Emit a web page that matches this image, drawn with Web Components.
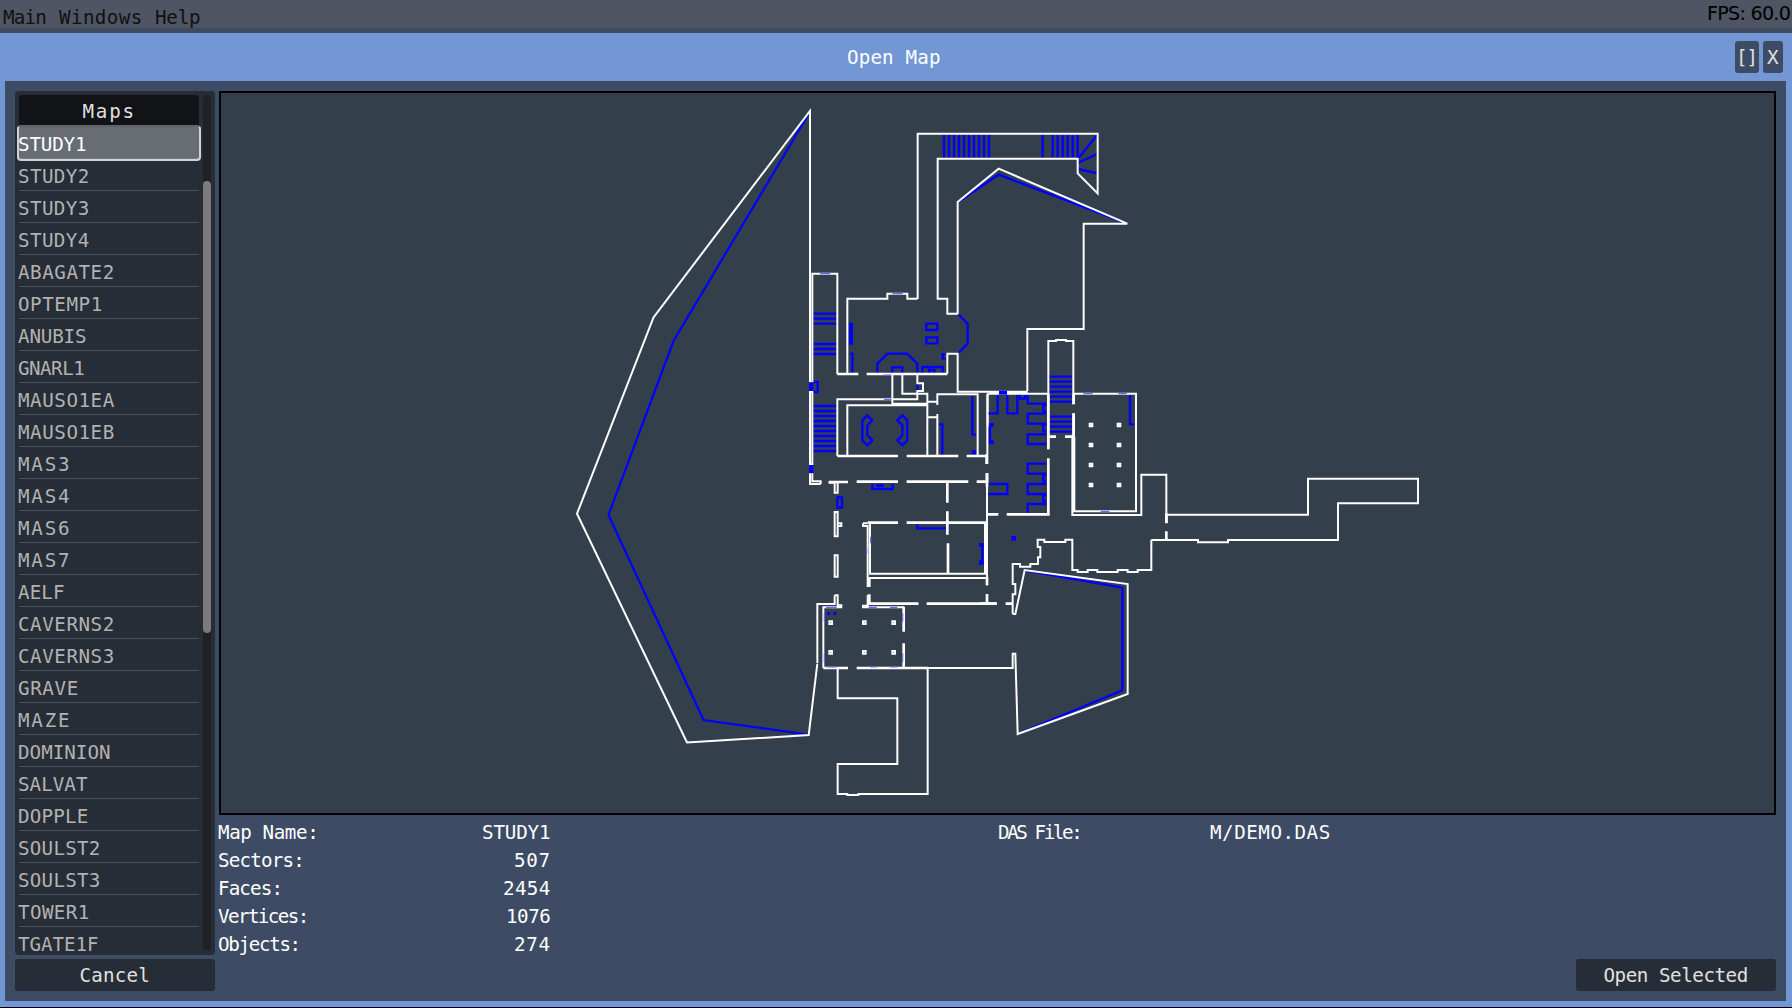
<!DOCTYPE html>
<html lang="en">
<head>
<meta charset="utf-8">
<title>Open Map</title>
<style>
html,body{margin:0;height:100%;background:#000;overflow:hidden}
body{font:19.2px/28px "DejaVu Sans Mono","Liberation Mono",monospace;color:#fff}
</style>
</head>
<body>
<map-app></map-app>
<script>
const define = (name, html, setup) => customElements.define(name, class extends HTMLElement {
  constructor() {
    super();
    const t = document.createElement('template');
    t.innerHTML = html;
    this.attachShadow({mode: 'open'}).append(t.content.cloneNode(true));
  }
  connectedCallback() { if (setup && !this.ready) { this.ready = true; setup(this, this.shadowRoot); } }
});

const ruler = document.createElement('canvas').getContext('2d');

/* Text label tracked out so that its ink is exactly `w` pixels wide. */
define('px-label', `<style>
  :host{display:block;white-space:pre;flex:none;text-align:left}
  :host([sans]){font-family:"DejaVu Sans",sans-serif}
  span{display:block;margin-left:-1px}
</style><span><slot></slot></span>`, (el, root) => {
  const w = +el.getAttribute('w'), text = el.textContent;
  ruler.font = '19.2px ' + (el.hasAttribute('sans') ? '"DejaVu Sans"' : '"DejaVu Sans Mono"');
  const natural = ruler.measureText(text).width;
  el.style.width = w + 'px';
  root.querySelector('span').style.letterSpacing = ((w + 1.5 - natural) / Math.max(1, text.length - .5)).toFixed(3) + 'px';
});

define('menu-bar', `<style>
  :host{display:flex;justify-content:space-between;box-sizing:border-box;height:33px;background:#4f5562;border-bottom:5px solid #3e4a5f;color:#111;padding:0 2px 0 4px;flex:none}
  nav{display:flex;gap:14px;padding-top:4px}
  .fps{color:#000}
</style>
<nav><px-label w="42">Main</px-label><px-label w="82">Windows</px-label><px-label w="44">Help</px-label></nav>
<px-label class="fps" sans w="82">FPS: 60.0</px-label>`);

define('ui-button', `<style>
  :host{display:flex;align-items:center;justify-content:center;height:32px;padding-top:2px;border-radius:3px;background:#272d36;color:#e0e0e0;box-sizing:border-box;flex:none}
  :host([tool]){background:#3d4c64}
</style><slot></slot>`);

define('title-bar', `<style>
  :host{display:grid;grid-template-columns:1fr auto 1fr;height:48px;padding:0 9px 0 5px;align-items:center;flex:none}
  .t{grid-column:2;padding-top:2px}
  .b{display:flex;gap:4px;justify-content:flex-end}
  ui-button{width:24px}
  ui-button+ui-button{width:20px}
</style>
<px-label class="t" w="92">Open Map</px-label>
<div class="b"><ui-button tool><px-label w="20">[]</px-label></ui-button><ui-button tool><px-label w="10">X</px-label></ui-button></div>`);

define('map-row', `<style>
  :host{display:block;box-sizing:border-box;height:32px;line-height:18px;color:#b2b2b2;padding-top:9px;border-bottom:1px solid #4a4f58;flex:none;margin:0 2px}
  :host([selected]){color:#fff;background:#686c73;border:2px solid #d0d2d4;border-top-color:#606369;border-radius:4px;box-shadow:inset 0 -1px #7c7f84;height:36px;margin:0 0 -2px;padding-top:9px}
</style><slot></slot>`);

const maps = [['STUDY1',67],['STUDY2',70],['STUDY3',70],['STUDY4',70],['ABAGATE2',95],['OPTEMP1',83],['ANUBIS',67],['GNARL1',65],['MAUSO1EA',95],['MAUSO1EB',95],['MAS3',51],['MAS4',51],['MAS6',51],['MAS7',51],['AELF',45],['CAVERNS2',95],['CAVERNS3',95],['GRAVE',59],['MAZE',51],['DOMINION',91],['SALVAT',68],['DOPPLE',69],['SOULST2',81],['SOULST3',81],['TOWER1',70],['TGATE1F',79]];

define('map-list', `<style>
  :host{display:flex;height:864px;box-sizing:border-box;background:#272d36;border-radius:4px;padding:4px 4px 0 2px;gap:2px;flex:none}
  .l{width:184px;height:860px;display:flex;flex-direction:column}
  header{height:30px;flex:none;margin:0 2px;background:#111316;border-radius:3px 3px 0 0;color:#e0e0e0;display:flex;justify-content:center;padding-top:3px;box-sizing:border-box}
  map-row:last-child{height:28px;border:0}
  .track{width:8px;height:855px;border-radius:4px;background:#1f2124}
  .thumb{height:452px;margin-top:86px;border-radius:4px;background:#7b7b7c}
  .track::before{content:"";display:table}
</style>
<div class="l"><header><px-label w="51">Maps</px-label></header>
${maps.map(([n, w], i) => `<map-row${i ? '' : ' selected'}><px-label w="${w}">${n}</px-label></map-row>`).join('')}</div><div class="track"><div class="thumb"></div></div>`);

const h = (x1, x2, ys) => ys.map(y => `M${x1},${y}H${x2}`).join('');
const v = (y1, y2, xs) => xs.map(x => `M${x},${y1}V${y2}`).join('');
const sq = pts => pts.map(([x, y]) => `M${x-4},${y-4}h8v8h-8z`).join('');
const region = (x, y, body) => `<g transform="translate(${x} ${y}) scale(${1/3})">${body}</g>`;
const W = d => `<path class="w" d="${d}"/>`, T = d => `<path class="w t" d="${d}"/>`,
      B = d => `<path class="b" d="${d}"/>`, F = d => `<path class="f" d="${d}"/>`, L = d => `<path class="p" d="${d}"/>`;
const box = (x, y, w, hh) => `M${x},${y}h${w}v${hh}h${-w}z`;

const plan =
  `<g><path class="b1" d="M809.5,112.5 673.5,341 608.5,515 703.5,720 808,734.5"/>
   <path class="w1" d="M810,273V111L653.5,317.4 577,513.7 687,742.5 808.7,735 817.3,664"/></g>` +
  region(900, 110,
    B(v(74,143,[132,147,162,177,192,207,222,237,252,267,428,458,473,488,503,518,533]) +
      'M535,145L592,74M535,158L592,132M535,177L592,190M175,275L296,194 682,341') +
    W('M53,567V71H593V250L533,190V146H113V566H142V611H173V276L296,176 682,341H551V657H382V843')) +
  region(790, 260,
    B(h(70,140,[161,176,191,252,267,282,438,453,468,483,498,513,528,543,558,573]) +
      'M70,366H83V396H70M180,281H187V338M262,338V311L292,281H352L382,311V338M307,340V322H337V340' +
      box(409,191,33,19) + box(409,232,33,18) +
      'M397,338V321H458V338M417,338V330H433V338M505,163L533,191V251L505,279' +
      'M232,466L217,481V541L232,556 247,541 232,526V496L247,481Z M337,466L352,481V541L337,556 322,541 337,526V496L322,481Z' +
      'M547,408V524H558M447,493H457V583M247,672V687H308V672M458,281V296H467') +
    F(box(177,188,12,66) + box(545,571,13,12) + box(258,672,23,9) + box(379,373,7,17) + box(455,279,12,7)) +
    W('M60,30V366M67,366V41H142V343M60,396V612H67V396ZM60,640V672H92M67,640V664H92V672' +
      'M172,341V116H292V101H352V116H382M472,341V281H503V395H600' +
      'M307,343V431H412M337,343V401H412V587M382,343V370H399V393H382V418H142V588M172,585V436H412' +
      'M412,425H442V403H563V588M442,435V425M415,472H442V462M442,472V588M593,403V500') +
    T('M142,342H205M230,342H472M142,588H324M350,588H505M530,588H593M591,588V612M591,640V668') +
    F(box(57,369,13,24) + box(57,615,13,24)) +
    L('M90,41H121M307,101H338M280,345H304M282,418H304')) +
  region(980, 300,
    B(h(208,277,[230,245,260,275,290,305,350,365,380,395]) +
      'M53,285V340H25M82,285V340H112V285M120,285V296H135V285' +
      'M143,285V311H198M198,341H143V371H198M190,311V334H198M198,403H143V432H198M190,371V394H198' +
      'M198,491H143V521H198M190,521V544H198M198,552H143V582H198M190,582V604H198M198,612H143V638' +
      'M40,375H30V428H40M25,552H82V582H25M450,285V373H463') +
    F(box(28,369,13,12) + box(28,421,13,12) + box(187,311,12,7) + box(187,371,12,7) + box(187,521,12,7) + box(187,582,12,7)) +
    W('M22,281V468M22,281H205M30,275H143M205,448V123H228V120H258V123H280V313M280,340V410M277,410V645H484V524H559V645' +
      'M283,410V634H468V281H281') +
    T('M20,462V492M205,281V448M205,475V643H80M22,643H55M205,410H228M255,410H278M281,281V313M281,340V410M559,642V668') +
    F(box(57,272,24,12)) +
    W(sq([[333,375],[417,375],[333,435],[417,435],[333,495],[417,495],[333,555],[417,555]])) +
    L('M310,281H338M415,281H440M362,634H388')) +
  region(790, 470,
    B(box(142,82,14,31) + 'M382,163V175H468M577,225V280') +
    F(box(111,426,9,9) + box(130,426,9,9) + box(567,219,14,12) + box(567,271,14,13)) +
    W('M116,38H134V68H143V38M134,126H143V199H134ZM143,160H154V168H143M134,256H143V320H134Z' +
      'M134,376H143V406H154V412H100V594M134,376V402H82V580M219,160V168H233V348H239V324H590M219,160H233' +
      'M240,160V311H585V160M233,376H239V402H385M233,376V407H219V412H342M591,36V346M585,160V311') +
    T('M116,36H174M200,35H324M350,35H535M560,35H591M472,38V98M472,124V194M474,220V312M233,158H324M350,158H590' +
      'M591,10V50M591,322V346M591,372V401M239,401H385M410,401H620M341,410V485M341,520V594M100,594H174M200,594H414') +
    W('M410,594H670') +
    W(sq([[122,458],[223,458],[311,458],[122,547],[223,547],[311,547]])) +
    L('M108,412H140M236,412H260M300,412H322M338,430V455M338,550V577M103,430V455M103,550V577M110,591H140M240,591H260M300,591H322M242,200V220M230,232V252')) +
  region(980, 470,
    B('M134,301L427,353V661L113,792') + F(box(94,198,14,14)) +
    W('M98,432V373H106V342H98V282H120V290H151V282H174V262H181V231H173V209H193V216H256V209H277V300H293V306H323V300H352V306H413V300H443V306H473V300H514V209' +
      'M98,432H106L134,300 443,342V672L113,792 106,551H98V594H90') +
    T('M0,401H50M77,401H97')) +
  region(820, 660, W('M53,24V115H232V312H53V402H82V405H115V402H323V24')) +
  region(1150, 460,
    W('M49,164H474V56H804V130H564V240H234V247H144V240H4') + T('M49,160V190M49,214V240'));

define('map-view', `<style>
  :host{display:block;box-sizing:border-box;height:724px;border:2px solid #000;background:#343f4c;flex:none}
  svg{display:block;width:100%;height:100%}
  path{fill:none;stroke-linejoin:miter}
  .w{stroke:#fff;stroke-width:5.9}
  .t{stroke-width:8}
  .b{stroke:#00f;stroke-width:7}
  .f{fill:#00f}
  .p{stroke:#66f;stroke-width:3.5}
  .w1{stroke:#fff;stroke-width:2}
  .b1{stroke:#00f;stroke-width:2.2}
</style><svg viewBox="221 93 1553 720">${plan}</svg>`);

define('info-row', `<style>
  :host{display:flex;justify-content:space-between;width:331px;height:28px}
</style><slot></slot>`);

define('map-info', `<style>
  :host{display:flex;height:144px;padding-top:4px;box-sizing:border-box;flex:none}
  .c{width:780px}
</style>
<div class="c">
<info-row><px-label w="99">Map Name:</px-label><px-label w="67">STUDY1</px-label></info-row>
<info-row><px-label w="85">Sectors:</px-label><px-label w="35">507</px-label></info-row>
<info-row><px-label w="63">Faces:</px-label><px-label w="46">2454</px-label></info-row>
<info-row><px-label w="89">Vertices:</px-label><px-label w="43">1076</px-label></info-row>
<info-row><px-label w="81">Objects:</px-label><px-label w="35">274</px-label></info-row>
</div>
<div><info-row><px-label w="82">DAS File:</px-label><px-label w="119">M/DEMO.DAS</px-label></info-row></div>`);

define('map-window', `<style>
  :host{display:flex;flex-direction:column;height:974px;background:#7397d5}
  main{display:flex;gap:4px;margin:0 6px 6px 5px;padding:10px;background:#3d4c64;height:920px;box-sizing:border-box}
  aside{width:200px;display:flex;flex-direction:column;gap:4px;flex:none}
  section{flex:1;display:flex;flex-direction:column}
  .open{width:200px;align-self:flex-end}
</style>
<title-bar></title-bar>
<main>
  <aside><map-list></map-list><ui-button><px-label w="69">Cancel</px-label></ui-button></aside>
  <section><map-view></map-view><map-info></map-info><ui-button class="open"><px-label w="143">Open Selected</px-label></ui-button></section>
</main>`);

define('map-app', `<style>:host{display:flex;flex-direction:column;width:1792px;height:1008px;background:#000}</style>
<menu-bar></menu-bar><map-window></map-window>`);
</script>
</body>
</html>
